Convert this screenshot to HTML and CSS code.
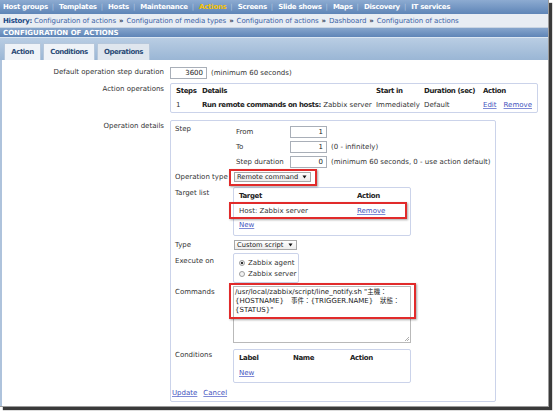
FILE: index.html
```html
<!DOCTYPE html>
<html>
<head>
<meta charset="utf-8">
<title>Configuration of actions</title>
<link rel="stylesheet" href="styles.css">
</head>
<body>
<div class="frame">
  <div class="nav">
    <span>Host groups</span><span class="sep">|</span>
    <span>Templates</span><span class="sep">|</span>
    <span>Hosts</span><span class="sep">|</span>
    <span>Maintenance</span><span class="sep">|</span>
    <span class="cur">Actions</span><span class="sep">|</span>
    <span>Screens</span><span class="sep">|</span>
    <span>Slide shows</span><span class="sep">|</span>
    <span>Maps</span><span class="sep">|</span>
    <span>Discovery</span><span class="sep">|</span>
    <span>IT services</span>
  </div>
  <div class="history">
    <b class="hl-title">History:</b>
    <span class="hlink">Configuration of actions</span><b class="raq">»</b>
    <span class="hlink">Configuration of media types</span><b class="raq">»</b>
    <span class="hlink">Configuration of actions</span><b class="raq">»</b>
    <span class="hlink">Dashboard</span><b class="raq">»</b>
    <span class="hlink">Configuration of actions</span>
  </div>
  <div class="title">CONFIGURATION OF ACTIONS</div>
  <div class="tabs">
    <span class="tab t1">Action</span>
    <span class="tab t2">Conditions</span>
    <span class="tab t3 active">Operations</span>
  </div>
  <div class="content">
    <div class="frow r1">
      <div class="lbl">Default operation step duration</div>
      <div class="val"><span class="inp">3600</span><span class="hint">(minimum 60 seconds)</span></div>
    </div>
    <div class="frow r2">
      <div class="lbl top">Action operations</div>
      <div class="val">
        <div class="box opsbox">
          <div class="orow head"><span class="c1">Steps</span><span class="c2">Details</span><span class="c3">Start in</span><span class="c4">Duration (sec)</span><span class="c5">Action</span></div>
          <div class="orow data"><span class="c1">1</span><span class="c2"><b class="bt">Run remote commands on hosts:</b> Zabbix server</span><span class="c3">Immediately</span><span class="c4">Default</span><span class="c5"><a class="lnk">Edit</a><a class="lnk rm">Remove</a></span></div>
        </div>
      </div>
    </div>
    <div class="frow r3">
      <div class="lbl top">Operation details</div>
      <div class="val">
        <div class="box detbox">
          <div class="drow step">
            <div class="dl">Step</div>
            <div class="dv">
              <div class="sub"><span class="sl">From</span><span class="inp">1</span></div>
              <div class="sub"><span class="sl">To</span><span class="inp">1</span><span class="hint">(0 - infinitely)</span></div>
              <div class="sub"><span class="sl">Step duration</span><span class="inp">0</span><span class="hint">(minimum 60 seconds, 0 - use action default)</span></div>
            </div>
          </div>
          <div class="drow optype">
            <div class="dl">Operation type</div>
            <div class="dv"><span class="sel w77 hl hl-sel">Remote command<svg class="arr" width="5" height="4" viewBox="0 0 5 4"><path d="M0.5 0.5h4L2.5 3.5z" fill="#111"/></svg></span></div>
          </div>
          <div class="drow target">
            <div class="dl">Target list</div>
            <div class="dv">
              <div class="box listbox tbox">
                <div class="lrow head"><span class="tc1">Target</span><span>Action</span></div>
                <div class="lrow data hl hl-row"><span class="tc1">Host: Zabbix server</span><a class="lnk">Remove</a></div>
                <div class="lrow new"><a class="lnk">New</a></div>
              </div>
            </div>
          </div>
          <div class="drow type">
            <div class="dl">Type</div>
            <div class="dv"><span class="sel w63">Custom script<svg class="arr" width="5" height="4" viewBox="0 0 5 4"><path d="M0.5 0.5h4L2.5 3.5z" fill="#111"/></svg></span></div>
          </div>
          <div class="drow exec">
            <div class="dl">Execute on</div>
            <div class="dv">
              <div class="box radiobox">
                <div class="rrow"><span class="radio on"></span>Zabbix agent</div>
                <div class="rrow"><span class="radio"></span>Zabbix server</div>
              </div>
            </div>
          </div>
          <div class="drow cmds">
            <div class="dl">Commands</div>
            <div class="dv">
              <div class="textarea hl hl-cmd">
                <div class="tx">/usr/local/zabbix/script/line_notify.sh "<span class="cjk">主機：</span><br>{HOSTNAME}　<span class="cjk">事件：</span>{TRIGGER.NAME}　<span class="cjk">狀態：</span><br>{STATUS}"</div>
                <svg class="grip" width="5" height="5" viewBox="0 0 5 5"><path d="M5 1L1 5M5 3L3 5" stroke="#9a9a9a" stroke-width="0.8"/></svg>
              </div>
            </div>
          </div>
          <div class="drow conds">
            <div class="dl">Conditions</div>
            <div class="dv">
              <div class="box listbox cbox">
                <div class="lrow head"><span class="cc1">Label</span><span class="cc2">Name</span><span>Action</span></div>
                <div class="lrow new"><a class="lnk">New</a></div>
              </div>
            </div>
          </div>
          <div class="foot"><a class="lnk">Update</a><a class="lnk">Cancel</a></div>
        </div>
      </div>
    </div>
  </div>
</div>
</body>
</html>
```

FILE: styles.css
```css
* { box-sizing: border-box; margin: 0; padding: 0; }
html, body { background: #fff; }
body {
  width: 554px; height: 412px; overflow: hidden;
  font-family: "DejaVu Sans", "Noto Sans CJK TC", sans-serif;
  font-size: 7px; color: #333;
}
.frame {
  width: 549px; height: 407px; background: #fff;
  border-right: 1px solid #9c9c9c; border-bottom: 1px solid #9c9c9c;
  box-shadow: 3px 3px 1px #3a3a3a;
  display: flex; flex-direction: column; overflow: hidden;
}
.nav {
  height: 14px; flex: none; display: flex; align-items: center; padding-left: 3px;
  background: linear-gradient(#8dabd1, #5e85b7);
  color: #fff; font-weight: bold; letter-spacing: -0.3px; white-space: nowrap;
}
.nav .sep { color: #b0c5df; letter-spacing: 0; padding: 0 5px 0 4px; font-weight: normal; }
.nav .cur { color: #f7c300; }
.history {
  height: 14px; flex: none; display: flex; align-items: center; padding-left: 3px;
  background: #e8edf3; color: #3d63a6; white-space: nowrap; letter-spacing: -0.08px;
  border-bottom: 1px solid #c9d5e3;
}
.history .hl-title { color: #1d4a86; margin-right: 2px; letter-spacing: -0.3px; }
.history .raq { color: #1f3452; margin: 0 3px; }
.title {
  height: 9px; flex: none; display: flex; align-items: center; padding-left: 3px;
  background: linear-gradient(#86a5cc, #5f85b7);
  color: #fff; font-weight: bold; white-space: nowrap;
}
.tabs {
  height: 23px; flex: none; display: flex; align-items: flex-end; gap: 2px; padding-left: 4px;
  background: linear-gradient(#b9cde3, #9ab6d5);
  border-top: 1px solid #dbe6f1;
}
.tab {
  height: 17px; display: flex; align-items: center; justify-content: center;
  background: #eff3f8; border: 1px solid #b6c7db; border-bottom: none;
  color: #2b4b77; font-weight: bold; letter-spacing: -0.45px; font-size: 7px;
}
.t1 { width: 37px; }
.t2 { width: 52px; }
.t3 { width: 53px; }
.tab.active { background: #dfe6ee; }
.content {
  flex: 1; border-left: 2px solid #aec3dc; padding-top: 6px;
}
.frow { display: flex; }
.lbl { width: 168px; flex: none; text-align: right; padding-right: 6px; white-space: nowrap; line-height: 9px; }
.r1 { height: 13px; align-items: center; }
.r2 { margin-top: 4px; }
.r3 { margin-top: 7px; }
.lbl.top { padding-top: 2px; }
.val { display: flex; align-items: center; }
.inp {
  display: inline-block; width: 37px; height: 12px; border: 1px solid #a9afb8;
  text-align: right; padding-right: 3px; line-height: 10px; background: #fff; color: #222;
}
.hint { margin-left: 4px; white-space: nowrap; }
.box { border: 1px solid #cbd3ea; border-radius: 2px; background: #fff; }
.opsbox { width: 368px; height: 30px; padding-left: 5px; }
.orow { display: flex; white-space: nowrap; }
.orow.head { height: 14px; align-items: center; font-weight: bold; color: #222; letter-spacing: -0.38px; }
.orow.data { height: 13px; align-items: center; }
.c1 { width: 26px; }
.c2 { width: 174px; }
.c3 { width: 48px; }
.c4 { width: 59px; }
.bt { font-weight: bold; color: #222; letter-spacing: -0.38px; }
.lnk { color: #4151bd; text-decoration: underline; text-decoration-color: #7f8ad6; }
.rm { margin-left: 7px; }
.detbox { width: 326px; height: 282px; padding: 3px 0 0 4px; display: flex; flex-direction: column; }
.drow { display: flex; }
.dl { width: 58px; flex: none; white-space: nowrap; line-height: 9px; }
.dv { flex: 1; display: flex; flex-direction: column; align-items: flex-start; }
.step .dl { padding-top: 1px; }
.sub { height: 15px; display: flex; align-items: center; padding-left: 3px; white-space: nowrap; }
.sl { width: 54px; }
.optype { height: 16px; align-items: center; }
.optype .dv { margin-left: 1px; }
.sel {
  display: inline-flex; align-items: center; justify-content: space-between;
  height: 10px; border: 1px solid #a8a8a8; padding: 0 3px 0 2px; font-size: 6.7px;
  background: linear-gradient(#ffffff, #ececec); color: #222; white-space: nowrap;
}
.w77 { width: 77px; }
.w63 { width: 63px; }
.arr { flex: none; }
.hl { position: relative; }
.hl::after {
  content: ""; position: absolute; border: 2px solid #e12b2b;
  box-shadow: 1px 1px 2px rgba(0,0,0,0.35);
}
.hl-sel::after { left: -6px; right: -7px; top: -4px; bottom: -5px; }
.hl-row::after { left: -5px; right: 3px; top: -2px; bottom: -1px; }
.hl-cmd::after { left: -5px; right: -6px; top: -4px; bottom: 23px; }
.target { margin-top: 2px; }
.target .dl { padding-top: 2px; }
.listbox { width: 178px; padding: 0 0 0 5px; }
.tbox { height: 49px; }
.lrow { display: flex; white-space: nowrap; align-items: center; }
.lrow.head { height: 16px; font-weight: bold; color: #222; letter-spacing: -0.38px; }
.lrow.data { height: 14px; margin-left: -5px; padding-left: 5px; }
.lrow.new { height: 14px; }
.tc1 { width: 118px; }
.type { margin-top: 4px; height: 10px; align-items: center; }
.type .dv { margin-left: 1px; }
.exec { margin-top: 3px; }
.exec .dl { padding-top: 3.5px; }
.radiobox { width: 66px; height: 30px; padding: 3px 0 0 5px; }
.rrow { height: 11px; display: flex; align-items: center; white-space: nowrap; }
.radio {
  width: 6px; height: 6px; border-radius: 50%; border: 1px solid #9d9d9d;
  background: #f2f2f2; margin-right: 3px; flex: none;
}
.radio.on { background: radial-gradient(circle, #333 0 1.3px, #f2f2f2 1.6px); }
.cmds { margin-top: 3px; }
.cmds .dl { padding-top: 1.5px; }
.textarea {
  width: 178px; height: 57px; border: 1px solid #b9b9b9; background: #fff;
  padding: 1px 0 0 1px; display: flex; flex-direction: column;
}
.tx { line-height: 9px; white-space: nowrap; color: #222; }
.cjk { font-size: 6.5px; }
.grip { margin-top: auto; align-self: flex-end; margin-right: 1px; margin-bottom: 1px; }
.conds { margin-top: 6px; }
.conds .dl { padding-top: 2px; }
.cbox { height: 34px; }
.cc1 { width: 54px; }
.cc2 { width: 57px; }
.foot { margin-top: 5px; margin-left: -3px; line-height: 10px; display: flex; gap: 6px; }
```
